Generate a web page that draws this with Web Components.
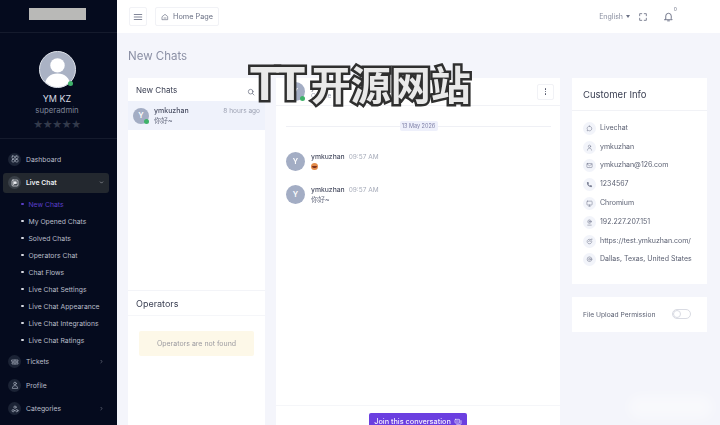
<!DOCTYPE html>
<html lang="en">
<head>
<meta charset="utf-8">
<title>New Chats</title>
<style>
  html, body { margin: 0; height: 100%; overflow: hidden; }
  body { font-family: Inter, "Noto Sans CJK SC", sans-serif; background: #f4f5fb; }
</style>
</head>
<body>
<lc-app>
  <lc-sidebar slot="sidebar"></lc-sidebar>
  <lc-topbar slot="topbar"></lc-topbar>
  <lc-chat-list slot="list"></lc-chat-list>
  <lc-chat-panel slot="panel"></lc-chat-panel>
  <lc-customer-info slot="info"></lc-customer-info>
</lc-app>
<lc-watermark><span>TT</span> 开源网站</lc-watermark>

<script>
const svg = (body, size = 10, extra = '') =>
  `<svg width="${size}" height="${size}" viewBox="0 0 24 24" fill="none" stroke="currentColor" stroke-width="2" stroke-linecap="round" stroke-linejoin="round" ${extra}>${body}</svg>`;

const ICONS = {
  dashboard: '<rect x="3" y="3" width="7.5" height="7.5" rx="2"/><rect x="13.5" y="3" width="7.5" height="7.5" rx="2"/><rect x="3" y="13.5" width="7.5" height="7.5" rx="2"/><rect x="13.5" y="13.5" width="7.5" height="7.5" rx="2"/>',
  chat: '<rect x="3" y="3" width="18" height="18" rx="3"/><path d="M8 8h8v6h-5l-3 2.5z" fill="currentColor"/>',
  ticket: '<path d="M3 6h18v4a2 2 0 0 0 0 4v4H3v-4a2 2 0 0 0 0-4z"/><path d="M12 6v12"/><path d="M7 10h2M7 14h2M15 10h2M15 14h2"/>',
  profile: '<circle cx="12" cy="7.5" r="4"/><path d="M4 21c.5-5 3.5-7 8-7s7.5 2 8 7z"/>',
  categories: '<circle cx="12" cy="6.5" r="3.5"/><circle cx="6.5" cy="17" r="3.5"/><circle cx="17.5" cy="17" r="3.5"/>',
  bubble: '<path d="M12 4a8 8 0 1 1-4 15l-4 1 1-4a8 8 0 0 1 7-12z"/>',
  user: '<circle cx="12" cy="8" r="4"/><path d="M5 21c.5-4.5 3-6.5 7-6.5s6.5 2 7 6.5"/>',
  mail: '<rect x="3" y="5" width="18" height="14" rx="2"/><path d="M3.5 7l8.5 6 8.500-6"/>',
  phone: '<path d="M6 3l3 1 1 5-2 1.500c1 2.500 3 4.500 5.500 5.500l1.500-2 5 1 1 3c0 1.500-1.500 3-3 3C10 21 3 14 3 6c0-1.500 1.500-3 3-3z" fill="currentColor" stroke="none"/>',
  monitor: '<rect x="3" y="4" width="18" height="13" rx="2"/><path d="M9 21h6M12 17v4"/>',
  ip: '<circle cx="12" cy="9" r="6"/><circle cx="12" cy="9" r="2"/><path d="M6 21h12"/>',
  link: '<path d="M20 12a8 8 0 1 1-3-6.200"/><path d="M20 3v4h-4"/><path d="M9 12a3 3 0 0 1 6 0"/>',
  pin: '<circle cx="12" cy="11" r="8"/><circle cx="12" cy="11" r="3"/>',
  home: '<path d="M4 10.500L12 4l8 6.500V20H4z"/><path d="M9 15h6"/>',
  menu: '<path d="M3 6h18M3 12h18M3 18h18"/>',
  bell: '<path d="M6 17V11a6 6 0 0 1 12 0v6l2 2H4z"/><path d="M10 21.500h4"/>',
  expand: '<path d="M4 9V4h5M15 4h5v5M20 15v5h-5M9 20H4v-5"/>',
  search: '<circle cx="11" cy="11" r="7"/><path d="M16.500 16.500L21 21"/>',
  join: '<rect x="3" y="4" width="14" height="11" rx="2"/><path d="M21 8v9a2 2 0 0 1-2 2H8"/><path d="M7 9h6"/>',
};

// every component: shadow root filled once from a css + html pair
class Base extends HTMLElement {
  connectedCallback() {
    if (this.shadowRoot) return;
    this.attachShadow({ mode: 'open' });
    this.shadowRoot.innerHTML = `<style>${this.css()}</style>${this.html()}`;
  }
  css() { return ''; }
  html() { return '<slot></slot>'; }
}

class LcApp extends Base {
  css() {
    return `
      :host { display: grid; grid-template-columns: 117px 1fr; height: 425px; overflow: hidden; filter: blur(.3px); }
      .side { grid-row: 1 / 3; min-height: 0; display: flex; }
      .main { display: flex; flex-direction: column; min-width: 0; min-height: 0; }
      h1 { margin: 0; padding: 16px 0 0 11px; height: 29px; font-size: 11.500px; line-height: 14px; font-weight: 400; color: #8b90a5; }
      .cols { display: flex; padding-left: 11px; min-height: 0; flex: 1; }
      ::slotted([slot=list]) { margin-right: 11px; }
      ::slotted([slot=panel]) { margin-right: 12px; }
    `;
  }
  html() {
    return `
      <div class="side"><slot name="sidebar"></slot></div>
      <div class="main">
        <slot name="topbar"></slot>
        <h1>New Chats</h1>
        <div class="cols">
          <slot name="list"></slot>
          <slot name="panel"></slot>
          <slot name="info"></slot>
        </div>
      </div>`;
  }
}

class LcNavItem extends Base {
  css() {
    return `
      :host { display: block; font-size: 6.800px; color: #b9bdc9; }
      .row { display: flex; align-items: center; height: 20px; margin: 0 8px 0 3px; padding: 0 5px 0 5px; border-radius: 3px; }
      :host([active]) .row { background: #23282f; color: #eef0f4; font-weight: 600; }
      .ic { width: 13px; height: 13px; border-radius: 50%; background: #1b2335; display: flex; align-items: center; justify-content: center; margin-right: 5px; flex: none; color: #aeb5c4; }
      :host([active]) .ic { background: #3a4048; color: #eef0f4; }
      .label { flex: 1; white-space: nowrap; }
      .caret { font-size: 0; width: 5px; height: 5px; }
    `;
  }
  html() {
    const caret = this.getAttribute('caret');
    const d = caret === 'down' ? 'M6 9l6 6 6-6' : 'M9 6l6 6-6 6';
    return `<div class="row">
      <span class="ic">${svg(ICONS[this.getAttribute('icon')], 8)}</span>
      <span class="label"><slot></slot></span>
      ${caret ? `<span class="caret">${svg(`<path d="${d}"/>`, 5, 'stroke-width="3"')}</span>` : ''}
    </div>`;
  }
}

class LcSubItem extends Base {
  css() {
    return `
      :host { display: flex; align-items: center; height: 17px; padding-left: 21px; font-size: 6.800px; color: #b9bdc9; white-space: nowrap; }
      :host::before { content: ""; width: 2.500px; height: 2.500px; border-radius: 50%; background: #d8dbe3; margin-right: 5px; }
      :host([active]) { color: #5b3fc9; }
      :host([active])::before { background: #5b3fc9; }
    `;
  }
}

class LcSidebar extends Base {
  css() {
    return `
      :host { display: block; width: 117px; height: 425px; background: #050b1e; overflow: hidden; }
      .logo { height: 32px; border-bottom: 1px solid #151b2d; display: flex; justify-content: center; padding-right: 3px; }
      .logo i { width: 57px; height: 12px; margin-top: 8px; background: #b9b9b7; }
      .user { height: 106px; border-bottom: 1px solid #151b2d; display: flex; flex-direction: column; align-items: center; box-sizing: border-box; padding: 18px 3px 0 0; }
      .avatar { width: 37px; height: 37px; border-radius: 50%; background: #aab2c4; border: 1px solid #dfe3ea; box-sizing: border-box; overflow: hidden; }
      .wrap { position: relative; width: 37px; height: 37px; }
      .wrap b { position: absolute; right: 3px; bottom: 2px; width: 5px; height: 5px; border-radius: 50%; background: #3fb26a; }
      .name { margin-top: 5px; font-size: 9px; line-height: 12px; color: #d8dbe3; }
      .role { font-size: 7.800px; line-height: 11px; color: #7d8496; }
      .stars { margin-top: 2px; font-size: 11px; line-height: 13px; letter-spacing: -.4px; color: #333a4b; font-family: "DejaVu Sans", sans-serif; }
      nav { padding-top: 10px; display: flex; flex-direction: column; }
      .sub { padding: 3px 0; }
      nav > lc-nav-item + lc-nav-item { margin-top: 3.500px; }
    `;
  }
  html() {
    return `
      <div class="logo"><i></i></div>
      <div class="user">
        <div class="wrap">
          <div class="avatar">
            <svg width="35" height="35" viewBox="0 0 34 34"><circle cx="17" cy="13" r="7" fill="#fff"/><path d="M4 34c1-9 6-13 13-13s12 4 13 13z" fill="#fff"/></svg>
          </div>
          <b></b>
        </div>
        <div class="name">YM KZ</div>
        <div class="role">superadmin</div>
        <div class="stars">★★★★★</div>
      </div>
      <nav>
        <lc-nav-item icon="dashboard">Dashboard</lc-nav-item>
        <lc-nav-item icon="chat" caret="down" active>Live Chat</lc-nav-item>
        <div class="sub">
          <lc-sub-item active>New Chats</lc-sub-item>
          <lc-sub-item>My Opened Chats</lc-sub-item>
          <lc-sub-item>Solved Chats</lc-sub-item>
          <lc-sub-item>Operators Chat</lc-sub-item>
          <lc-sub-item>Chat Flows</lc-sub-item>
          <lc-sub-item>Live Chat Settings</lc-sub-item>
          <lc-sub-item>Live Chat Appearance</lc-sub-item>
          <lc-sub-item>Live Chat Integrations</lc-sub-item>
          <lc-sub-item>Live Chat Ratings</lc-sub-item>
        </div>
        <lc-nav-item icon="ticket" caret="right">Tickets</lc-nav-item>
        <lc-nav-item icon="profile">Profile</lc-nav-item>
        <lc-nav-item icon="categories" caret="right">Categories</lc-nav-item>
      </nav>`;
  }
}

class LcTopbar extends Base {
  css() {
    return `
      :host { display: flex; align-items: center; height: 33px; flex: none; background: #fff; box-sizing: border-box; padding: 0 0 0 12px; color: #6a7084; font-size: 7.300px; }
      .box { border: 1px solid #f1f2f6; border-radius: 2px; height: 19px; box-sizing: border-box; display: flex; align-items: center; justify-content: center; }
      .menu { width: 18px; margin-right: 8px; }
      .home { width: 64px; gap: 4px; }
      .space { flex: 1; }
      .lang { margin-right: 3px; color: #8a8fa0; font-size: 7px; }
      .tri { width: 0; height: 0; border: 2px solid transparent; border-top: 3px solid #6a7084; border-bottom: 0; margin-right: 8px; }
      .bell { position: relative; margin: 0 46px 0 15px; display: flex; }
      sup { position: absolute; top: -4px; right: -3px; font-size: 5px; line-height: 5px; color: #6a7084; }
      svg { display: block; }
    `;
  }
  html() {
    return `
      <div class="box menu">${svg(ICONS.menu, 10, 'stroke-width="1.600"')}</div>
      <div class="box home">${svg(ICONS.home, 8)}<span>Home Page</span></div>
      <span class="space"></span>
      <span class="lang">English</span><span class="tri"></span>
      ${svg(ICONS.expand, 10)}
      <span class="bell">${svg(ICONS.bell, 11, 'stroke-width="1.700"')}<sup>0</sup></span>`;
  }
}

class LcAvatar extends Base {
  css() {
    return `
      :host { position: relative; display: flex; align-items: center; justify-content: center; flex: none; width: var(--size, 19px); height: var(--size, 19px); border-radius: 50%; background: #a3adc4; color: #fff; font-size: 7.500px; font-weight: 600; }
      :host([online])::after { content: ""; position: absolute; right: 0; bottom: 0; width: 5px; height: 5px; border-radius: 50%; background: #3fb26a; }
    `;
  }
}

class LcChatList extends Base {
  css() {
    return `
      :host { display: flex; flex-direction: column; width: 137px; flex: none; height: 347px; background: #fff; color: #4a4f63; }
      .head { display: flex; align-items: center; justify-content: space-between; height: 23px; padding: 0 10px 0 8px; flex: none; font-size: 8px; color: #3c4154; }
      .head span { display: flex; color: #5d6375; position: relative; top: 2px; }
      .row { display: flex; align-items: center; gap: 5px; height: 29px; padding: 0 5px; background: #eff2fb; flex: none; }
      .txt { flex: 1; min-width: 0; }
      .top { display: flex; justify-content: space-between; align-items: baseline; font-size: 7px; line-height: 10px; font-weight: 500; color: #4a4f63; }
      .top small { font-size: 6.500px; font-weight: 400; color: #9da2b3; }
      .msg { font-size: 7px; line-height: 9px; color: #686d80; }
      .fill { flex: 1; }
      .ops { flex: none; height: 135px; border-top: 1px solid #f3f4f8; box-sizing: border-box; }
      .ops h2 { margin: 0; height: 24px; border-bottom: 1px solid #f5f6f9; padding-left: 8px; font-size: 9px; line-height: 25px; font-weight: 400; color: #3c4154; }
      .alert { margin: 15px 11px 0; height: 25px; background: #fdf8e8; display: flex; align-items: center; justify-content: center; font-size: 7px; color: #9b9aa0; border-radius: 2px; }
    `;
  }
  html() {
    return `
      <div class="head">New Chats<span>${svg(ICONS.search, 8)}</span></div>
      <div class="row">
        <lc-avatar online style="--size:16px">Y</lc-avatar>
        <div class="txt">
          <div class="top">ymkuzhan<small>8 hours ago</small></div>
          <div class="msg">你好~</div>
        </div>
      </div>
      <div class="fill"></div>
      <div class="ops">
        <h2>Operators</h2>
        <div class="alert">Operators are not found</div>
      </div>`;
  }
}

class LcMessage extends Base {
  css() {
    return `
      :host { display: flex; gap: 6px; align-items: center; height: 19px; color: #4a4f63; }
      .top { font-size: 6.800px; line-height: 10px; font-weight: 500; }
      small { font-size: 6.500px; font-weight: 400; color: #a6abb9; margin-left: 4px; }
      .body { font-size: 7px; line-height: 10px; color: #686d80; }
    `;
  }
  html() {
    return `<lc-avatar>Y</lc-avatar>
      <div>
        <div class="top">${this.getAttribute('name')}<small>${this.getAttribute('time')}</small></div>
        <div class="body"><slot></slot></div>
      </div>`;
  }
}

class LcChatPanel extends Base {
  css() {
    return `
      :host { display: flex; flex-direction: column; width: 284px; flex: none; height: 347px; background: #fff; }
      .head { display: flex; align-items: center; gap: 6px; height: 27px; flex: none; padding: 0 6px 0 10px; border-bottom: 1px solid #f1f2f6; font-size: 7px; color: #4a4f63; }
      .head .who { flex: 1; line-height: 9px; }
      .who small { display: block; font-size: 6.500px; color: #9da2b3; }
      .more { width: 17px; height: 16px; border: 1px solid #f1f2f6; border-radius: 2px; box-sizing: border-box; display: flex; align-items: center; justify-content: center; flex-direction: column; }
      .more i { width: 1.500px; height: 1.500px; background: #4a4f63; border-radius: 50%; margin: .5px 0; }
      .date { display: flex; align-items: center; margin: 15px 9px 0 10px; }
      .date::before, .date::after { content: ""; flex: 1; height: 1px; background: #eff0f5; }
      .date span { background: #eef0fb; color: #7d7fa6; font-size: 5.500px; line-height: 10px; border-radius: 2px; width: 38px; text-align: center; white-space: nowrap; }
      .msgs { flex: 1; padding: 21px 10px 0; display: flex; flex-direction: column; gap: 14px; }
      .foot { height: 20px; flex: none; border-top: 1px solid #f5f6f9; display: flex; justify-content: center; padding-top: 7px; box-sizing: border-box; }
      .join { width: 98px; height: 17px; flex: none; background: #6b3fe0; color: #f2eeff; border: 0; border-radius: 2px; font: inherit; font-size: 7.300px; font-weight: 500; display: flex; align-items: center; justify-content: center; gap: 3px; padding: 0; }
      .emoji { display: inline-block; width: 7px; height: 7px; border-radius: 50%; background: #e38b4a; position: relative; top: 1px; overflow: hidden; }
      .emoji::after { content: ""; position: absolute; left: 1px; right: 1px; top: 3.500px; height: 2px; background: #7a2f1c; border-radius: 0 0 2px 2px; }
    `;
  }
  html() {
    return `
      <div class="head">
        <lc-avatar online>Y</lc-avatar>
        <div class="who">ymkuzhan<small>Offline</small></div>
        <div class="more"><i></i><i></i><i></i></div>
      </div>
      <div class="date"><span>13 May 2026</span></div>
      <div class="msgs">
        <lc-message name="ymkuzhan" time="09:57 AM"><span class="emoji" role="img" aria-label="grinning face"></span></lc-message>
        <lc-message name="ymkuzhan" time="09:57 AM">你好~</lc-message>
      </div>
      <div class="foot"><button class="join">Join this conversation ${svg(ICONS.join, 8)}</button></div>`;
  }
}

class LcInfoRow extends Base {
  css() {
    return `
      :host { display: flex; align-items: center; gap: 4px; height: 18.800px; font-size: 7px; color: #5b6072; white-space: nowrap; }
      .ic { width: 13px; height: 13px; border-radius: 50%; background: #f2f4fa; color: #7c8296; display: flex; align-items: center; justify-content: center; flex: none; position: relative; top: 1px; }
      svg { display: block; }
    `;
  }
  html() {
    return `<span class="ic">${svg(ICONS[this.getAttribute('icon')], 7)}</span><span><slot></slot></span>`;
  }
}

class LcCustomerInfo extends Base {
  css() {
    return `
      :host { display: flex; flex-direction: column; gap: 13px; width: 135px; flex: none; }
      .card { background: #fff; }
      h2 { margin: 0; height: 32px; line-height: 33px; padding-left: 11px; border-bottom: 1px solid #f1f2f6; font-size: 9.500px; font-weight: 400; color: #3c4154; }
      .rows { padding: 7px 0 0 11px; height: 173px; box-sizing: border-box; }
      .perm { height: 35px; display: flex; align-items: center; justify-content: space-between; padding: 0 16px 0 11px; font-size: 6.700px; color: #5b6072; }
      .toggle { width: 19px; height: 10px; border: 1px solid #d9dbe3; border-radius: 6px; box-sizing: border-box; position: relative; top: -1px; }
      .toggle::before { content: ""; display: block; width: 8px; height: 8px; border-radius: 50%; background: #fff; border: 1px solid #d9dbe3; box-sizing: border-box; }
    `;
  }
  html() {
    return `
      <div class="card">
        <h2>Customer Info</h2>
        <div class="rows">
          <lc-info-row icon="bubble">Livechat</lc-info-row>
          <lc-info-row icon="user">ymkuzhan</lc-info-row>
          <lc-info-row icon="mail">ymkuzhan@126.com</lc-info-row>
          <lc-info-row icon="phone">1234567</lc-info-row>
          <lc-info-row icon="monitor">Chromium</lc-info-row>
          <lc-info-row icon="ip">192.227.207.151</lc-info-row>
          <lc-info-row icon="link">https://test.ymkuzhan.com/</lc-info-row>
          <lc-info-row icon="pin">Dallas, Texas, United States</lc-info-row>
        </div>
      </div>
      <div class="card perm">File Upload Permission<span class="toggle"></span></div>`;
  }
}

// overlay burned into the screenshot, sits over the cards
class LcWatermark extends Base {
  css() {
    return `
      :host { position: absolute; left: 250px; top: 60px; font-family: "Noto Sans CJK SC", sans-serif; font-size: 40px; line-height: 46px; font-weight: 700; white-space: nowrap; color: #e9e9e9; -webkit-text-stroke: 5px #2f2f2f; paint-order: stroke fill; }
      ::slotted(span) { font-family: "Liberation Sans", sans-serif; font-size: 48px; letter-spacing: -3.500px; }
      :host::after { content: ""; position: absolute; left: 378px; top: 335px; width: 85px; height: 24px; border-radius: 12px; background: #fff; opacity: .4; filter: blur(6px); }
    `;
  }
}

customElements.define('lc-app', LcApp);
customElements.define('lc-nav-item', LcNavItem);
customElements.define('lc-sub-item', LcSubItem);
customElements.define('lc-sidebar', LcSidebar);
customElements.define('lc-topbar', LcTopbar);
customElements.define('lc-avatar', LcAvatar);
customElements.define('lc-chat-list', LcChatList);
customElements.define('lc-message', LcMessage);
customElements.define('lc-chat-panel', LcChatPanel);
customElements.define('lc-info-row', LcInfoRow);
customElements.define('lc-customer-info', LcCustomerInfo);
customElements.define('lc-watermark', LcWatermark);
</script>
</body>
</html>
